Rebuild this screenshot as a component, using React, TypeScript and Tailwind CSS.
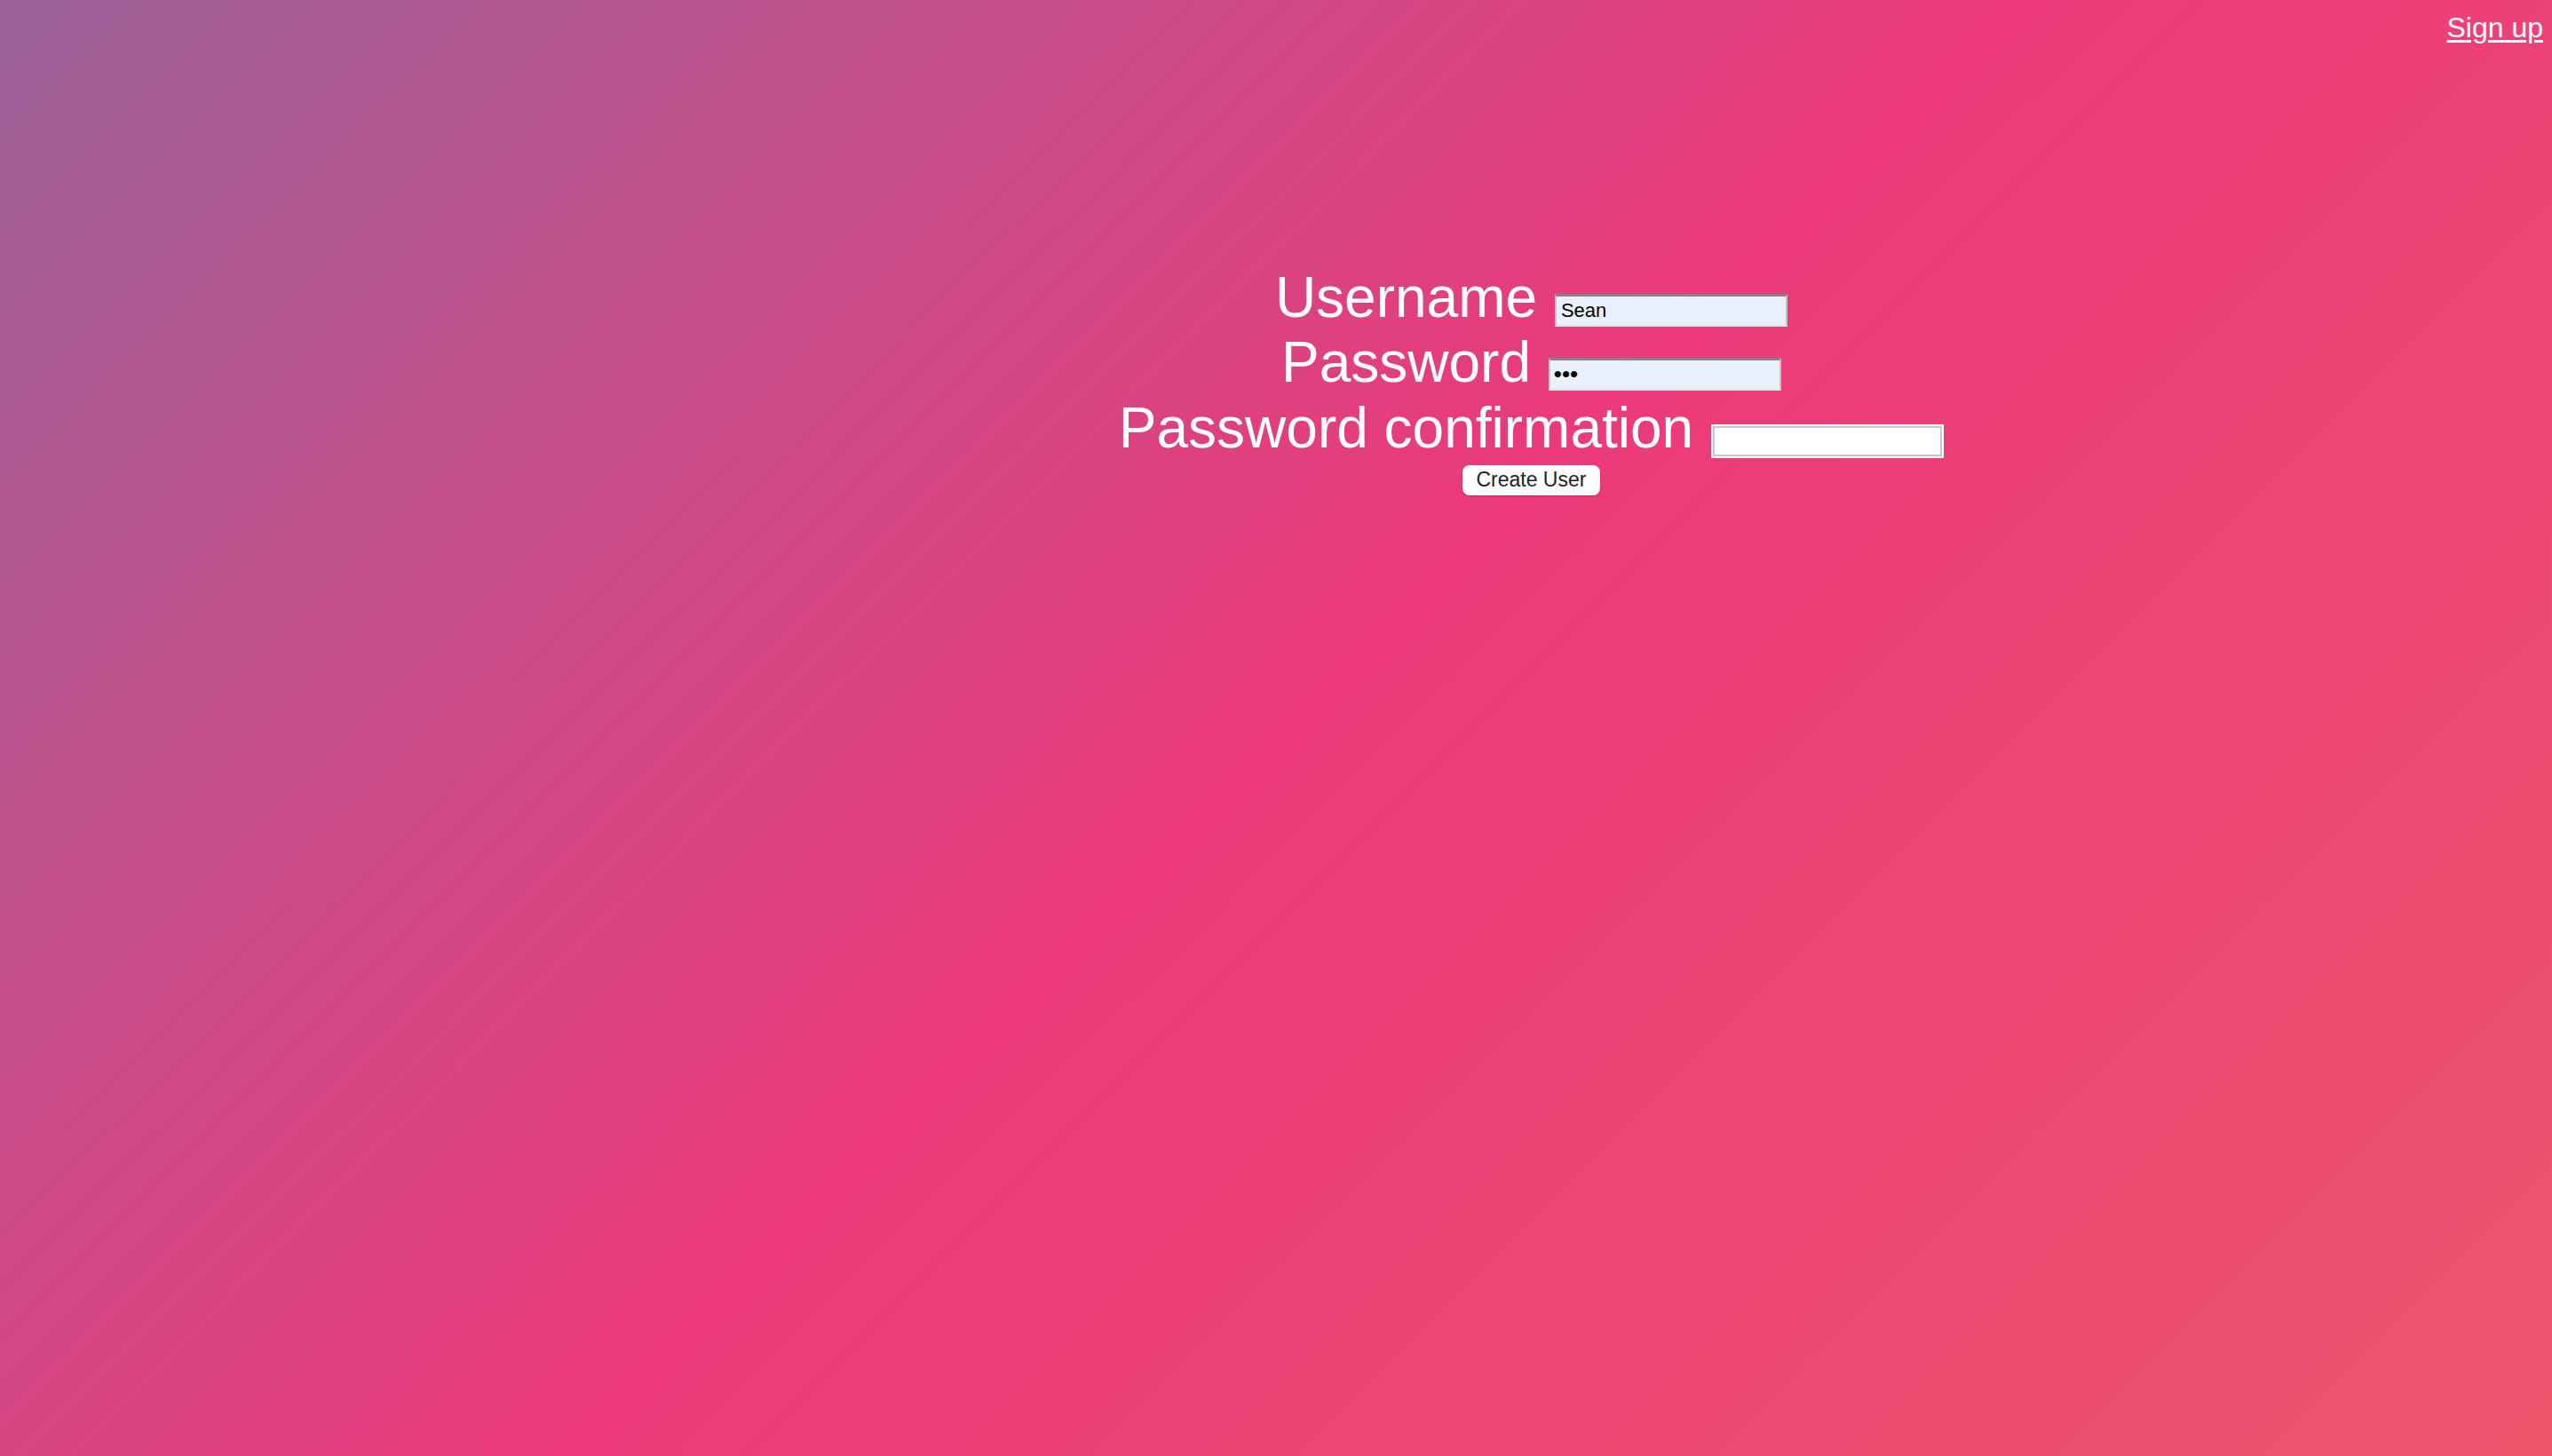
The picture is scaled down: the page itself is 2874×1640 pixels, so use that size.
import React from "react";

export default function App() {
  return (
    <div className="min-h-screen w-full bg-[linear-gradient(135deg,#9c6399_0%,#ec3a7a_50%,#ed556c_100%)] font-['Liberation_Sans',Arial,sans-serif] text-white">
      {/* top link */}
      <div className="flex justify-end pt-[13px] pr-[10px]">
        <a href="#" className="text-[32px] leading-[1.15] text-white underline underline-offset-[3px]">
          Sign up
        </a>
      </div>

      {/* signup form, centred in the right 80% of the page */}
      <form className="mt-[249px] pl-[20%]" onSubmit={(e) => e.preventDefault()}>
        <div className="text-center text-[64px] leading-[1.15]">
          <label htmlFor="username">Username</label>{" "}
          <input
            id="username"
            type="text"
            defaultValue="Sean"
            className="ml-[2px] h-[37px] w-[262px] border-x-2 border-t-[3px] border-b-2 border-x-[#c4c4c4] border-t-[#858585] border-b-[#e2e2e2] bg-[#e8f0fe] px-[5px] align-baseline text-[22px] leading-normal text-black outline-none"
          />
        </div>
        <div className="text-center text-[64px] leading-[1.15]">
          <label htmlFor="password">Password</label>{" "}
          <input
            id="password"
            type="password"
            defaultValue="abc"
            className="ml-[2px] h-[37px] w-[262px] border-x-2 border-t-[3px] border-b-2 border-x-[#c4c4c4] border-t-[#858585] border-b-[#e2e2e2] bg-[#e8f0fe] px-[4px] align-baseline text-[26px] leading-normal text-black outline-none"
          />
        </div>
        <div className="text-center text-[64px] leading-[1.15]">
          <label htmlFor="password_confirmation">Password confirmation</label>{" "}
          <input
            id="password_confirmation"
            type="password"
            className="ml-[2px] h-[38px] w-[262px] border-2 border-white bg-white px-[5px] align-baseline text-[22px] leading-normal text-black shadow-[inset_0_0_0_2px_#c8c8c8] outline-none"
          />
        </div>
        <div className="mt-[4px] text-center">
          <button
            type="submit"
            className="h-[34px] w-[155px] rounded-[8px] bg-white text-[23px] leading-none text-[#222] shadow-[0_1px_2px_rgba(0,0,0,0.25)]"
          >
            Create User
          </button>
        </div>
      </form>
    </div>
  );
}
